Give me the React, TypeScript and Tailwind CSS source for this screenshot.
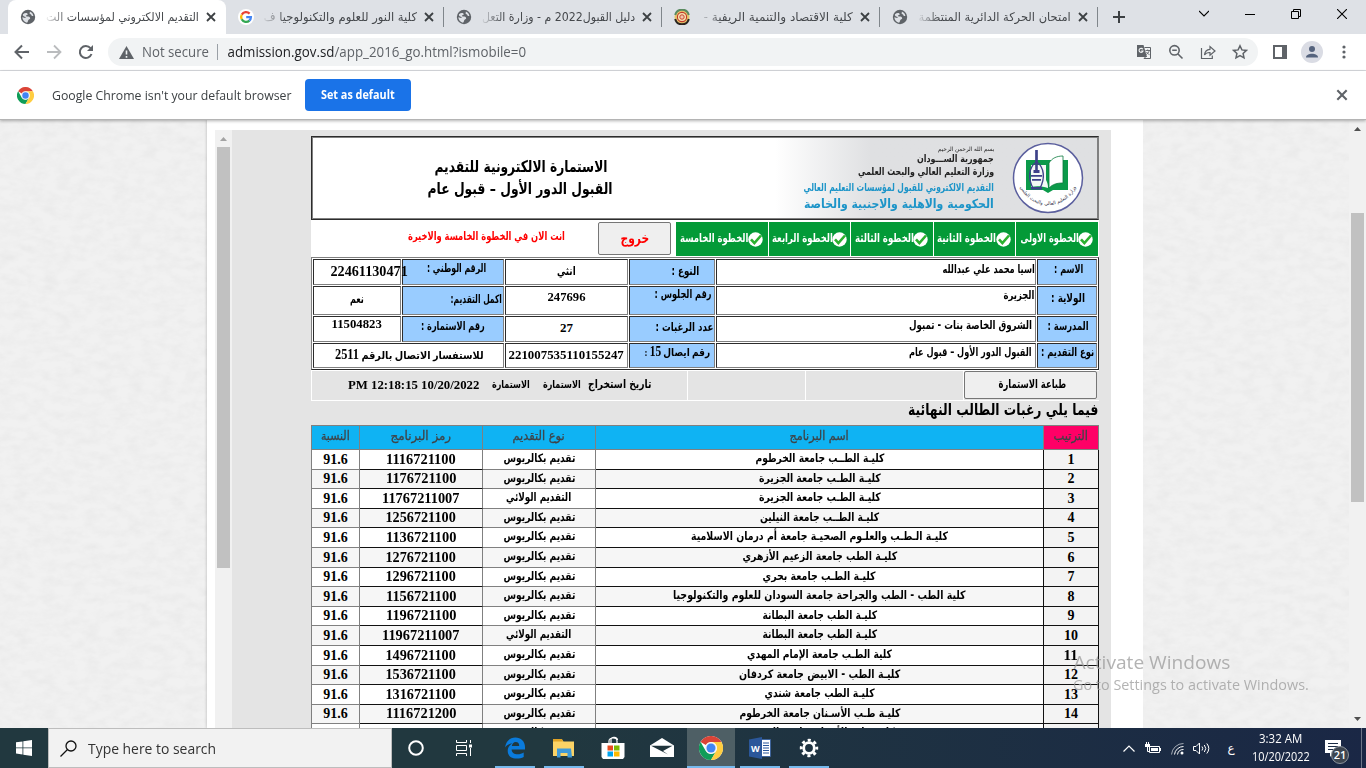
import { useLayoutEffect, useRef, useState } from "react";
import type { ReactNode } from "react";

/* A single line of text condensed or stretched to a fixed measure. */
function Fit({ w, className = "", children }: { w: number; className?: string; children: ReactNode }) {
  const ref = useRef<HTMLSpanElement>(null);
  const [scale, setScale] = useState(1);
  useLayoutEffect(() => {
    if (ref.current && ref.current.offsetWidth) setScale(w / ref.current.offsetWidth);
  }, [w]);
  return (
    <span className={`flex shrink-0 justify-center ${className}`} style={{ width: w }}>
      <span ref={ref} className="shrink-0 whitespace-pre" style={{ transform: `scaleX(${scale})` }}>
        {children}
      </span>
    </span>
  );
}

const AR = "font-['DejaVu_Sans',sans-serif] leading-none [direction:rtl]";
const AR_MIXED = "font-['Liberation_Serif','DejaVu_Sans',serif] leading-none [direction:rtl]";
const SERIF = "font-['Liberation_Serif','DejaVu_Sans',serif] leading-none";
const UI = "font-['Open_Sans','Noto_Sans',sans-serif] leading-none";

const Globe = () => (
  <svg className="size-4 shrink-0" viewBox="0 0 16 16">
    <circle cx="8" cy="8" r="7.2" fill="#5f6368" />
    <path d="M3 5.2C4.300 4.200 6 3.800 7.300 4.400c1 .6.300 1.700-.8 1.900-1 .3-.6 1.200.4 1.200 1.700 0 3.400.4 3.300 1.700-.1 1.200-1.700 1-2 2-.2.9-.4 1.800-1.200 2.500C4.300 13.200 2.400 10.700 2.300 8.300l2.800.6c.8.100.8-1-.1-1.200C3.900 7.400 2.500 7 3 5.200z" fill="#dee1e6" />
    <path d="M9.800 2.600c1.700.6 3.200 2.200 3.600 4.300-1 .5-1.900 0-2.100-.9-.2-.8-1.400-.6-1.700-1.500-.2-.7.6-1.100.2-1.900z" fill="#dee1e6" />
  </svg>
);

const Google = () => (
  <svg className="size-4 shrink-0" viewBox="0 0 16 16">
    <circle cx="8" cy="8" r="8" fill="#fff" />
    <g fill="none" strokeWidth="2.3">
      <path d="M3.8 5.6A4.9 4.9 0 0 1 11.6 4.6" stroke="#ea4335" />
      <path d="M3.7 5.7a4.9 4.9 0 0 0 0 4.6" stroke="#fbbc05" />
      <path d="M3.7 10.3a4.9 4.9 0 0 0 7.7 1.3" stroke="#34a853" />
      <path d="M8.2 8.2h4.7a4.8 4.8 0 0 1-1.6 3.5" stroke="#4285f4" />
    </g>
  </svg>
);

const Seal = () => (
  <svg className="size-4 shrink-0" viewBox="0 0 16 16">
    <circle cx="8" cy="8" r="7.5" fill="#e7c46a" />
    <path d="M1.200 6A7 7 0 0 1 14.800 6" fill="none" stroke="#5a8a60" strokeWidth="2" />
    <path d="M1.200 10a7 7 0 0 0 13.600 0" fill="none" stroke="#2a2420" strokeWidth="2" />
    <circle cx="8" cy="8" r="4.6" fill="#f6e3b0" stroke="#c23a2c" strokeWidth="1.1" />
    <circle cx="8" cy="8" r="2.2" fill="#f3c9b0" stroke="#c8452e" />
  </svg>
);

const Cross = ({ className = "" }: { className?: string }) => (
  <svg className={`shrink-0 ${className}`} viewBox="0 0 12 12">
    <path d="M2 2l8 8M10 2l-8 8" stroke="currentColor" strokeWidth="1.8" />
  </svg>
);

const Chrome = ({ className = "" }: { className?: string }) => (
  <svg className={`shrink-0 ${className}`} viewBox="0 0 48 48">
    <circle cx="24" cy="24" r="24" fill="#fff" />
    <path d="M3.2 12A24 24 0 0 1 44.8 12H24a12 12 0 0 0-10.4 6z" fill="#db4437" />
    <path d="M3.2 12A24 24 0 0 0 24 48l10.4-18A12 12 0 0 1 13.6 30z" fill="#0f9d58" />
    <path d="M44.8 12A24 24 0 0 1 24 48l10.4-18A12 12 0 0 0 24 12z" fill="#ffcd40" />
    <circle cx="24" cy="24" r="11.5" fill="#f1f1f1" />
    <circle cx="24" cy="24" r="9" fill="#4285f4" />
  </svg>
);

const tabs = [
  { title: "التقديم الالكتروني لمؤسسات الت", w: 153, icon: <Globe />, active: true },
  { title: "كلية النور للعلوم والتكنولوجيا ف", w: 153, icon: <Google />, active: false },
  { title: "دليل القبول2022 م - وزارة التعل", w: 153, icon: <Globe />, active: false },
  { title: "كلية الاقتصاد والتنمية الريفية -", w: 149, icon: <Seal />, active: false },
  { title: "امتحان الحركة الدائرية المنتظمة", w: 152, icon: <Globe />, active: false },
];

function TabStrip() {
  return (
    <div className="flex h-[34px] shrink-0 bg-[#dee1e6] pl-2">
      {tabs.map((t) => (
        <div
          key={t.title}
          className={
            t.active
              ? "flex w-[218px] shrink-0 items-center rounded-t-lg bg-white pl-3"
              : "flex w-[218px] shrink-0 items-center pl-3"
          }
        >
          {t.icon}
          <div className="flex w-[163px] justify-end [mask-image:linear-gradient(to_right,transparent_8px,black_32px)]">
            <Fit w={t.w} className={`${AR} pb-px text-[12px] text-[#45484c]`}>{t.title}</Fit>
          </div>
          <Cross className="ml-[6px] size-3 text-[#3c4043]" />
          {!t.active && <span className="ml-[8px] h-5 w-px bg-[#80868b]" />}
        </div>
      ))}
      <div className="flex flex-1 items-center pl-[15px]">
        <svg className="size-3" viewBox="0 0 12 12">
          <path d="M6 0v12M0 6h12" stroke="#3c4043" strokeWidth="2" />
        </svg>
        <div className="ml-auto flex h-full items-start gap-[36px] pr-[19px] pt-[9px] text-black">
          <svg className="size-[10px]" viewBox="0 0 10 10"><path d="M0 2l5 5 5-5" fill="none" stroke="currentColor" strokeWidth="1.1" /></svg>
          <svg className="size-[10px]" viewBox="0 0 10 10"><path d="M0 5.5h10" stroke="currentColor" /></svg>
          <svg className="size-[10px]" viewBox="0 0 10 10"><path d="M.5 2.5h7v7h-7zM2.5 2.5v-2h7v7h-2" fill="none" stroke="currentColor" /></svg>
          <svg className="size-[10px]" viewBox="0 0 10 10"><path d="M0 0l10 10M10 0L0 10" stroke="currentColor" strokeWidth="1.1" /></svg>
        </div>
      </div>
    </div>
  );
}

function Toolbar() {
  return (
    <div className="flex h-[37px] shrink-0 items-center border-b border-[#dadce0] bg-white pl-[14px] text-[#5f6368]">
      <svg className="size-4" viewBox="0 0 16 16"><path d="M15 8H2M8 1.5L1.5 8 8 14.5" fill="none" stroke="currentColor" strokeWidth="2" /></svg>
      <svg className="ml-4 size-4 text-[#babcbe]" viewBox="0 0 16 16"><path d="M1 8h13M8 1.5L14.5 8 8 14.5" fill="none" stroke="currentColor" strokeWidth="1.8" /></svg>
      <svg className="ml-4 size-4" viewBox="0 0 16 16">
        <path d="M13.5 10A6 6 0 1 1 12.5 4.2" fill="none" stroke="currentColor" strokeWidth="2" />
        <path d="M15 1v6H9z" fill="currentColor" />
      </svg>
      <div className="ml-[14px] flex h-7 w-[1150px] items-center rounded-full bg-[#f1f3f4] pl-[11px] pr-[10px]">
        <svg className="h-[13px] w-[15px]" viewBox="0 0 15 13">
          <path d="M7.5 0L15 13H0z" fill="currentColor" />
          <path d="M7.5 4.5v4M7.5 10v1.7" stroke="#f1f3f4" strokeWidth="1.6" />
        </svg>
        <Fit w={67} className={`${UI} ml-[8px] text-[14px] text-[#5f6368]`}>Not secure</Fit>
        <span className="ml-[8px] h-4 w-px bg-[#9aa0a6]" />
        <Fit w={299} className={`${UI} ml-[9px] text-[14px] text-[#5f6368]`}>
          <span className="text-[#202124]">admission.gov.sd</span>/app_2016_go.html?ismobile=0
        </Fit>
        <div className="ml-auto flex items-center gap-4">
          <svg className="size-4" viewBox="0 0 16 16">
            <path d="M1 1h6.5l3.5 12H1z" fill="currentColor" />
            <path d="M8.5 3.5h6v11H8l2-2" fill="none" stroke="currentColor" />
            <path d="M9.5 6.5h4.5M11.7 5.5v1M13.2 6.5c-.4 2-1.5 3-3 4M10.5 8c.8 1.500 1.800 2 3 2.600" fill="none" stroke="currentColor" strokeWidth=".9" />
            <path d="M6.800 5.300A2 2 0 1 0 7 7H5.200" fill="none" stroke="#f1f3f4" strokeWidth="1.100" />
          </svg>
          <svg className="size-4" viewBox="0 0 16 16"><path d="M6.500 1.600a4.700 4.700 0 1 1 0 9.400 4.700 4.700 0 0 1 0-9.400M10 10l4.500 4.500M4.200 6.300h4.600" fill="none" stroke="currentColor" strokeWidth="1.600" /></svg>
          <svg className="size-4" viewBox="0 0 16 16"><path d="M1.500 4v10.500h10.800v-3M4.500 11c.3-4 2-5.500 5.500-5.700V2.500L15 7l-5 4.200V8.500C7.500 8.400 5.800 9 4.500 11z" fill="none" stroke="currentColor" strokeWidth="1.200" /></svg>
          <svg className="size-4" viewBox="0 0 16 16"><path d="M8 1.800l1.900 4.100 4.500.5-3.300 3 .9 4.400L8 11.600l-4 2.200.9-4.400-3.300-3 4.500-.5z" fill="none" stroke="currentColor" strokeWidth="1.500" /></svg>
        </div>
      </div>
      <svg className="ml-[15px] size-[14px]" viewBox="0 0 14 14"><path d="M1 1h12v12H1z" fill="none" stroke="currentColor" strokeWidth="2" /><path d="M9 0h5v14H9z" fill="currentColor" /></svg>
      <svg className="ml-[14px] size-[22px]" viewBox="0 0 22 22">
        <circle cx="11" cy="11" r="11" fill="#dadce4" />
        <circle cx="11" cy="8" r="3" fill="#55637d" />
        <path d="M5 16.500c0-5 12-5 12 0z" fill="#55637d" />
      </svg>
      <svg className="ml-[19px] h-[14px] w-1" viewBox="0 0 4 14" fill="currentColor"><circle cx="2" cy="2" r="1.600" /><circle cx="2" cy="7" r="1.600" /><circle cx="2" cy="12" r="1.600" /></svg>
    </div>
  );
}

function InfoBar() {
  return (
    <div className="z-10 flex h-[49px] shrink-0 items-center border-b border-[#b4b4b4] bg-white pl-[17px] shadow-[0_1px_3px_rgba(0,0,0,0.3)]">
      <Chrome className="size-[17px]" />
      <Fit w={240} className={`${UI} ml-[18px] text-[13px] text-[#3c4043]`}>Google Chrome isn't your default browser</Fit>
      <button className="ml-[13px] flex h-8 w-[106px] items-center justify-center rounded bg-[#1a73e8] text-white">
        <Fit w={74} className={`${UI} text-[12px] font-bold`}>Set as default</Fit>
      </button>
      <Cross className="ml-auto mr-[17px] size-[14px] text-[#5f6368]" />
    </div>
  );
}

const Paper = ({ className }: { className: string }) => (
  <svg className={className}>
    <filter id="paper" x="0" y="0" width="100%" height="100%">
      <feTurbulence type="fractalNoise" baseFrequency="0.07 0.12" numOctaves="4" seed="4" />
      <feColorMatrix values="0 0 0 0 .45  0 0 0 0 .45  0 0 0 0 .45  .14 .14 0 0 -.11" />
    </filter>
    <rect width="100%" height="100%" fill="#f1f1f1" />
    <rect width="100%" height="100%" filter="url(#paper)" />
  </svg>
);

const Logo = () => (
  <svg className="size-[74px] shrink-0" viewBox="0 0 74 74">
    <circle cx="37" cy="37" r="34.500" fill="#fff" stroke="#5b5f9e" strokeWidth="1.500" />
    <path d="M15 19h42v30H42l-5 3-5-3H15z" fill="#0b9a4a" />
    <path d="M38 22c3-5 8-7 14-7v27c-6 0-10 1-14 5z" fill="#fff" stroke="#0b7a3e" strokeWidth=".8" />
    <path d="M20 24h15v15c1 2 2 4 2 8-6-2-12-2-17-1z" fill="#f3faf5" />
    <path d="M25.500 9v12c-8 5-9 17-3 27M25.500 21c8 5 9 17 3 27" fill="none" stroke="#3e4189" strokeWidth="1.400" />
    <path d="M24.200 9h2.600v20h-2.600zM20 34h11v1.800H20zM21 38h9v1.800h-9zM22.500 29h6v3h-6zM20 46h11v2.500H20z" fill="#3e4189" />
    <path id="rim" d="M8 43a30.500 30.500 0 0 0 58 0" fill="none" />
    <text className="font-['DejaVu_Sans',sans-serif]" fontSize="4.800" fill="#35354a" textAnchor="middle">
      <textPath href="#rim" startOffset="50%">وزارة التعليم العالي والبحث العلمي</textPath>
    </text>
  </svg>
);

const Tick = () => (
  <svg className="-ml-px size-[15px] shrink-0" viewBox="0 0 15 15">
    <circle cx="7.500" cy="7.500" r="7.200" fill="#fff" />
    <path d="M3 7.300l3.400 3.800L13 3.500" fill="none" stroke="#2bb12f" strokeWidth="2.600" />
  </svg>
);

function Banner() {
  return (
    <div className="flex h-[84px] items-stretch border border-[#2c2c2c] border-r-[#808080] bg-white p-px ring-1 ring-inset ring-[#808080]">
      <div className="flex w-[462px] shrink-0 flex-col items-start pt-[21px] text-black">
        <Fit w={173} className={`${AR} ml-[121px] text-[16px] font-bold`}>الاستمارة الالكترونية للتقديم</Fit>
        <Fit w={185} className={`${AR} ml-[115px] mt-[6px] text-[16px] font-bold`}>القبول الدور الأول – قبول عام</Fit>
      </div>
      <div className="flex flex-1 items-center bg-linear-to-r from-white to-[#dfe0e2] to-30%">
        <div className="flex flex-1 flex-col items-end pr-[17px] text-[#222]">
          <Fit w={56} className={`${AR} text-[6px]`}>بسم الله الرحمن الرحيم</Fit>
          <Fit w={77} className={`${AR} mt-[2px] text-[10px] font-bold`}>جمهورية الســـودان</Fit>
          <Fit w={136} className={`${AR} mt-[2px] text-[10.500px] font-bold`}>وزارة التعليم العالي والبحث العلمي</Fit>
          <Fit w={190} className={`${AR} mt-[6px] text-[11px] font-bold text-[#1c94c8]`}>التقديم الالكتروني للقبول لمؤسسات التعليم العالي</Fit>
          <Fit w={190} className={`${AR} mt-[5px] text-[12.500px] font-bold text-[#1c94c8]`}>الحكومية والاهلية والاجنبية والخاصة</Fit>
        </div>
        <Logo />
        <div className="w-[12px]" />
      </div>
    </div>
  );
}

const steps = [
  { t: "الخطوة الخامسة", w: 68, c: "w-[92px]" },
  { t: "الخطوة الرابعة", w: 61, c: "w-[81px]" },
  { t: "الخطوة الثالثة", w: 59, c: "w-[82px]" },
  { t: "الخطوة الثانية", w: 59, c: "w-[81px]" },
  { t: "الخطوة الاولى", w: 58, c: "w-[82px]" },
];

function Steps() {
  return (
    <div className="flex h-[37px] gap-px bg-white pt-[2px]">
      <div className="flex w-[286px] shrink-0 items-start pl-[97px] pt-[9px]">
        <Fit w={157} className={`${AR} text-[11.500px] font-bold text-[#ff0000]`}>انت الان في الخطوة الخامسة والاخيرة</Fit>
      </div>
      <button className="mr-[4px] flex h-[33px] w-[73px] shrink-0 items-center justify-center rounded-[2px] border border-[#767676] bg-[#efefef] pb-[2px]">
        <Fit w={29} className={`${AR} text-[14px] font-bold text-[#ff0000]`}>خروج</Fit>
      </button>
      {steps.map((s) => (
        <div key={s.t} className={`flex h-[34px] items-center justify-center bg-[#039a37] pr-px ${s.c}`}>
          <Fit w={s.w} className={`${AR} text-[11.500px] font-bold text-white`}>{s.t}</Fit>
          <Tick />
        </div>
      ))}
    </div>
  );
}

type Cell = { t: string; w: number; p: string; blue?: boolean; num?: boolean; mixed?: boolean };
const info: Cell[] = [
  { t: "22461130471", w: 77, p: "pl-[17px] pb-px text-[14px]", num: true },
  { t: "الرقم الوطني :", w: 59, p: "pl-[24px] pb-[7px]", blue: true },
  { t: "انثي", w: 19, p: "pl-[51px] pb-px" },
  { t: "النوع :", w: 28, p: "pl-[41px] pb-px", blue: true },
  { t: "اسيا محمد علي عبدالله", w: 92, p: "pl-[226px] pb-[5px]" },
  { t: "الاسم :", w: 29, p: "pl-[16px] pb-[5px]", blue: true },

  { t: "نعم", w: 14, p: "pl-[36px] pb-[2px]" },
  { t: "اكمل التقديم:", w: 51, p: "pl-[48px] pb-[2px]", blue: true },
  { t: "247696", w: 38, p: "pl-[41px] pb-[9px] text-[13px]", num: true },
  { t: "رقم الجلوس :", w: 57, p: "pl-[25px] pb-[11px]", blue: true },
  { t: "الجزيرة", w: 31, p: "pl-[286px] pb-[9px]" },
  { t: "الولاية :", w: 34, p: "pl-[13px] pb-[4px]", blue: true },

  { t: "11504823", w: 50, p: "pl-[18px] pb-[12px] text-[13px]", num: true },
  { t: "رقم الاستمارة :", w: 64, p: "pl-[18px] pb-[4px]", blue: true },
  { t: "27", w: 13, p: "pl-[54px] pb-[3px] text-[13px]", num: true },
  { t: "عدد الرغبات :", w: 58, p: "pl-[25px] pb-[3px]", blue: true },
  { t: "الشروق الخاصة بنات - تمبول", w: 123, p: "pl-[192px] pb-[6px]" },
  { t: "المدرسة :", w: 41, p: "pl-[10px] pb-[5px]", blue: true },

  { t: "للاستفسار الاتصال بالرقم 2511", w: 149, p: "col-span-2 pl-[21px] pb-px", mixed: true },
  { t: "221007535110155247", w: 115, p: "pl-[3px] pb-[3px] text-[13px]", num: true },
  { t: "رقم ايصال 15 :", w: 66, p: "pl-[14px] pb-[7px]", blue: true, mixed: true },
  { t: "القبول الدور الأول – قبول عام", w: 123, p: "pl-[192px] pb-[6px]" },
  { t: "نوع التقديم :", w: 53, p: "pl-[3px] pb-[6px]", blue: true },
];

/* Digits are set a little larger than the Arabic around them. */
const mixedRuns = (t: string) =>
  t.split(/(\d+)/).map((part, i) =>
    i % 2 ? <span key={i} className="text-[14px]">{part}</span> : part
  );

function InfoGrid() {
  return (
    <div className="grid h-[113px] grid-cols-[88px_102px_123px_86px_320px_60px] grid-rows-[26px_29px_26px_25px] gap-px border border-[#808080] border-b-[#2c2c2c] border-r-[#2c2c2c] bg-white p-px">
      {info.map((c) => (
        <div
          key={c.t}
          className={`flex min-w-0 items-center border border-[#2c2c2c] border-b-[#808080] border-r-[#808080] font-bold text-black ${c.blue ? "bg-[#99ccff]" : "bg-white"} ${c.p}`}
        >
          {c.num ? (
            <Fit w={c.w} className={`${SERIF} relative`}>{c.t}</Fit>
          ) : c.mixed ? (
            <Fit w={c.w} className={`${AR_MIXED} text-[11px]`}>{mixedRuns(c.t)}</Fit>
          ) : (
            <Fit w={c.w} className={`${AR} text-[11.500px]`}>{c.t}</Fit>
          )}
        </div>
      ))}
    </div>
  );
}

const BSC = "تقديم بكالريوس";
const STATE = "التقديم الولائي";
const wishes: { name: string; w: number; type: string; code: string; h: string }[] = [
  { name: "كليـة الطــب جامعة الخرطوم", w: 129, type: BSC, code: "1116721100", h: "h-[20px]" },
  { name: "كليـة الطـب جامعة الجزيرة", w: 122, type: BSC, code: "1176721100", h: "h-[19px]" },
  { name: "كليـة الطـب جامعة الجزيرة", w: 122, type: STATE, code: "11767211007", h: "h-[20px]" },
  { name: "كليـة الطــب جامعة النيلين", w: 119, type: BSC, code: "1256721100", h: "h-[19px]" },
  { name: "كليـة الـطـب والعلـوم الصحيـة جامعة أم درمان الاسلامية", w: 257, type: BSC, code: "1136721100", h: "h-[20px]" },
  { name: "كليـة الطب جامعة الزعيم الأزهري", w: 155, type: BSC, code: "1276721100", h: "h-[20px]" },
  { name: "كليـة الطـب جامعة بحري", w: 113, type: BSC, code: "1296721100", h: "h-[19px]" },
  { name: "كلية الطب - الطب والجراحة جامعة السودان للعلوم والتكنولوجيا", w: 293, type: BSC, code: "1156721100", h: "h-[20px]" },
  { name: "كليـة الطب جامعة البطانة", w: 115, type: BSC, code: "1196721100", h: "h-[19px]" },
  { name: "كليـة الطب جامعة البطانة", w: 115, type: STATE, code: "11967211007", h: "h-[20px]" },
  { name: "كلية الطـب جامعة الإمام المهدي", w: 145, type: BSC, code: "1496721100", h: "h-[20px]" },
  { name: "كليـة الطب - الابيض جامعة كردفان", w: 161, type: BSC, code: "1536721100", h: "h-[19px]" },
  { name: "كليـة الطب جامعة شندي", w: 110, type: BSC, code: "1316721100", h: "h-[20px]" },
  { name: "كليـة طـب الأسـنان جامعة الخرطوم", w: 161, type: BSC, code: "1116721200", h: "h-[19px]" },
  { name: "كليـة طب الأسنان جامعة الجزيرة", w: 150, type: BSC, code: "1176721200", h: "h-[20px]" },
];

const COLS = "grid grid-cols-[48px_123px_113px_448px_55px]";
const MID = "flex items-center justify-center border-b border-r";

function Wishes() {
  return (
    <div className="w-[788px] border-l border-t border-[#808080] font-bold text-black">
      <div className={`${COLS} h-6 text-[#3f4347]`}>
        {[
          ["النسبة", 29],
          ["رمز البرنامج", 61],
          ["نوع التقديم", 52],
          ["اسم البرنامج", 59],
          ["الترتيب", 34],
        ].map(([t, w], i) => (
          <div key={t} className={`${MID} border-[#808080] pb-[2px] ${i === 4 ? "bg-[#ff0066]" : "bg-[#0fb3f3]"}`}>
            <Fit w={Number(w)} className={`${AR} text-[12.500px] font-normal [-webkit-text-stroke:0.3px_#3f4347]`}>{t}</Fit>
          </div>
        ))}
      </div>
      {wishes.map((r, i) => (
        <div key={i} className={`${COLS} ${r.h} ${i % 2 ? "bg-[#f6f6f6]" : "bg-white"}`}>
          <div className={`${MID} border-[#808080]`}>
            <Fit w={25} className={`${SERIF} text-[14px]`}>91.6</Fit>
          </div>
          <div className={`${MID} border-b-[#111] border-r-[#808080]`}>
            <Fit w={r.code.length * 7} className={`${SERIF} text-[14px]`}>{r.code}</Fit>
          </div>
          <div className={`${MID} border-[#808080] pb-px`}>
            <Fit w={r.type === BSC ? 72 : 65} className={`${AR} text-[11.500px]`}>{r.type}</Fit>
          </div>
          <div className={`${MID} border-[#111] pb-px`}>
            <Fit w={r.w} className={`${AR} text-[11.500px]`}>{r.name}</Fit>
          </div>
          <div className={`${MID} border-[#111] bg-[#f3f3f3]`}>
            <Fit w={i < 9 ? 7 : 14} className={`${SERIF} text-[14px]`}>{i + 1}</Fit>
          </div>
        </div>
      ))}
    </div>
  );
}

function PrintRow() {
  return (
    <div className="flex h-[31px] gap-px border-b border-white bg-white pl-px pt-px">
      <div className="flex w-[375px] items-center bg-[#e4e4e4] pb-[2px] pl-[36px] font-bold text-black">
        <Fit w={131} className={`${SERIF} text-[12px]`}>PM 12:18:15 10/20/2022</Fit>
        <Fit w={38} className={`${AR} ml-[13px] text-[11px]`}>الاستمارة</Fit>
        <Fit w={38} className={`${AR} ml-[13px] text-[11px]`}>الاستمارة</Fit>
        <Fit w={63} className={`${AR} ml-[7px] text-[11.500px]`}>تاريخ استخراج</Fit>
      </div>
      <div className="w-[117px] bg-[#e4e4e4]" />
      <div className="w-[157px] bg-[#e4e4e4]" />
      <div className="flex-1 bg-[#e4e4e4]">
        <button className="flex h-[28px] w-[133px] items-center justify-center rounded-[2px] border border-[#767676] bg-[#efefef] pb-[2px] pl-[3px]">
          <Fit w={68} className={`${AR} text-[12px] font-bold text-black`}>طباعة الاستمارة</Fit>
        </button>
      </div>
    </div>
  );
}

function Page() {
  return (
    <div className="flex min-h-0 flex-1 overflow-hidden bg-[#eeeeee]">
      <Paper className="h-full w-[207px] shrink-0" />
      <div className="flex w-[936px] shrink-0 bg-white pl-2 pt-[10px] shadow-[0_0_3px_rgba(0,0,0,0.25)]">
        <div className="flex w-[896px] overflow-hidden bg-[#e4e4e4]">
          <div className="flex w-[17px] shrink-0 flex-col items-center bg-[#f1f1f1]">
            <svg className="h-[17px] w-[9px]" viewBox="0 0 9 17"><path d="M1 11h7L4.500 7z" fill="#a3a3a3" /></svg>
            <div className="h-[421px] w-[13px] bg-[#c1c1c1]" />
          </div>
          <div className="ml-[79px] w-[788px] shrink-0 pt-[6px]">
            <Banner />
            <Steps />
            <InfoGrid />
            <PrintRow />
            <div className="flex h-6 items-start justify-end pr-px pt-px">
              <Fit w={190} className={`${AR} text-[16px] font-bold text-black`}>فيما يلي رغبات الطالب النهائية</Fit>
            </div>
            <Wishes />
          </div>
        </div>
      </div>
      <Paper className="h-full w-[206px] shrink-0" />
      <div className="flex w-[17px] shrink-0 flex-col items-center bg-[#f1f1f1]">
        <svg className="h-[17px] w-[9px]" viewBox="0 0 9 17"><path d="M1 11h7L4.500 7z" fill="#505050" /></svg>
        <div className="mt-[76px] h-[289px] w-[13px] bg-[#c1c1c1]" />
        <svg className="mt-auto h-[17px] w-[9px]" viewBox="0 0 9 17"><path d="M1 6h7l-3.500 4z" fill="#505050" /></svg>
      </div>
    </div>
  );
}

const apps: { name: string; on: boolean; focus?: boolean; icon: ReactNode }[] = [
  {
    name: "edge", on: true,
    icon: <svg className="size-[22px]" viewBox="0 0 22 22"><path d="M1 10.500C2 3.500 6.500.5 11.300.5 17 .5 21 4.500 21 10v2.600H7.600c.2 3.500 3 4.700 5.900 4.700 2.400 0 4.500-.7 6.200-1.800v4.600c-2 1-4.400 1.500-6.900 1.500C7 21.600 3.700 18.400 3.700 14c0-3.500 2-6.300 4.800-7.800C5.500 6.500 2.700 8 1 10.500zM7.800 9h7.400c0-2.400-1-4-3.500-4C9.600 5.100 8.200 6.800 7.800 9z" fill="#0a7bdc" fillRule="evenodd" /></svg>,
  },
  {
    name: "explorer", on: true,
    icon: <svg className="h-[20px] w-[22px]" viewBox="0 0 22 20"><path d="M0 1.500h9l1.500 2H21V18H0z" fill="#fbd366" /><path d="M0 1h9l1 2.500H0z" fill="#e0a326" /><path d="M4 10.500h14l1 9h-4.500V15h-7v4.500H4z" fill="#3f9ad9" /></svg>,
  },
  {
    name: "store", on: false,
    icon: <svg className="h-[24px] w-[24px]" viewBox="0 0 24 24"><path d="M8 8V5c0-4 8-4 8 0v3M10 8V3c1-2.500 6-2 6.500 1" fill="none" stroke="#fff" strokeWidth="1.200" /><path d="M.5 7h23v14l-1.500 2h-20l-1.500-2z" fill="#fff" /><path d="M6.500 9.500H12v5H6.500z" fill="#e64b20" /><path d="M13 9.500h5.500v5H13z" fill="#7fba00" /><path d="M6.500 15.500H12v5H6.500z" fill="#00a4ef" /><path d="M13 15.500h5.500v5H13z" fill="#ffb900" /></svg>,
  },
  {
    name: "mail", on: false,
    icon: <svg className="h-[20px] w-[24px]" viewBox="0 0 24 20"><path d="M0 7.500L12 0l12 7.500V19H0z" fill="#fff" /><path d="M1 7.800h21.500L13 13l5 3.500z" fill="#20343c" /></svg>,
  },
  { name: "chrome", on: true, focus: true, icon: <Chrome className="size-6" /> },
  {
    name: "word", on: true,
    icon: (
      <svg className="size-[22px]" viewBox="0 0 22 22">
        <path d="M12 2.500h9.500v17H12z" fill="#fff" stroke="#2b579a" strokeWidth=".8" />
        <path d="M14 6h6M14 8.500h6M14 11h6M14 13.500h6M14 16h6" stroke="#2b579a" />
        <path d="M0 2.500L13 0v22L0 19.500z" fill="#2b579a" />
        <text x="6.400" y="14.500" textAnchor="middle" fontSize="9" fontWeight="700" fill="#fff" className="font-['Open_Sans',sans-serif]">W</text>
      </svg>
    ),
  },
  {
    name: "settings", on: true,
    icon: (
      <svg className="size-[20px]" viewBox="0 0 20 20" fill="none" stroke="#fff">
        <circle cx="10" cy="10" r="5.300" strokeWidth="2.800" />
        <circle cx="10" cy="10" r="7.800" strokeWidth="2.800" strokeDasharray="3.060 3.066" strokeDashoffset="1.530" />
      </svg>
    ),
  },
];

function Taskbar() {
  return (
    <div className="flex h-10 shrink-0 bg-linear-to-r from-[#21383f] from-40% to-[#1a2745] text-white">
      <div className="flex w-12 shrink-0 items-center justify-center">
        <svg className="size-4" viewBox="0 0 16 16" fill="#fff"><path d="M0 2.300l6.500-.9v6.100H0zM7.300 1.300L16 0v7.500H7.300zM0 8.300h6.500v6.200L0 13.600zM7.300 8.300H16V16l-8.700-1.300z" /></svg>
      </div>
      <div className="flex w-[344px] shrink-0 items-center border border-[#bdbdbd] bg-[#f2f2f2] pl-[11px]">
        <svg className="size-[17px]" viewBox="0 0 17 17"><circle cx="11" cy="6" r="5" fill="none" stroke="#111" strokeWidth="1.300" /><path d="M7.500 9.500L.5 16.500" stroke="#111" strokeWidth="1.300" /></svg>
        <Fit w={128} className={`${UI} ml-[11px] text-[15px] text-[#333]`}>Type here to search</Fit>
      </div>
      <div className="flex w-12 shrink-0 items-center justify-center">
        <svg className="size-4" viewBox="0 0 16 16"><circle cx="8" cy="8" r="6.800" fill="none" stroke="#fff" strokeWidth="2" /></svg>
      </div>
      <div className="flex w-12 shrink-0 items-center justify-center">
        <svg className="size-4" viewBox="0 0 16 16" fill="none" stroke="#fff"><path d="M.5 0v2.500h10V0M.5 5.500h10v5H.5zM.5 16v-2.500h10V16M14.500 0v3M14.500 8v8" /><path d="M13 4.500h3v3h-3z" fill="#fff" stroke="none" /></svg>
      </div>
      <div className="ml-[3px] flex gap-px">
        {apps.map((a) => (
          <div key={a.name} className={`flex w-12 flex-col items-center ${a.focus ? "bg-[#4e5f65]" : ""}`}>
            <div className="flex h-[38px] items-center justify-center pt-[2px]">{a.icon}</div>
            {a.on && <div className={`h-[2px] bg-[#76b9ed] ${a.focus ? "w-12" : "w-10"}`} />}
          </div>
        ))}
      </div>
      <div className="ml-auto flex items-center">
        <div className="flex w-6 justify-center"><svg className="h-[7px] w-[12px]" viewBox="0 0 12 7"><path d="M.5 6.500L6 1l5.500 5.500" fill="none" stroke="#fff" strokeWidth="1.200" /></svg></div>
        <div className="flex w-6 justify-center">
          <svg className="h-[12px] w-[16px]" viewBox="0 0 16 12"><path d="M4.500 4.500h10v6h-10z" fill="none" stroke="#fff" /><path d="M6 6h7v3H6zM15 6h1v3h-1zM0 2h5v3H0z" fill="#fff" /><path d="M1.500 0v2M3.500 0v2M2.500 5v4.500h2" stroke="#fff" fill="none" /></svg>
        </div>
        <div className="flex w-6 justify-center">
          <svg className="size-[13px]" viewBox="0 0 13 13" fill="none" stroke="#fff"><path d="M.5 12.500a12 12 0 0 1 12-11" opacity=".6" /><path d="M3.500 12.500a9 9 0 0 1 9-8M6.500 12.500a6 6 0 0 1 6-5" /><circle cx="11" cy="11" r="1.500" fill="#fff" stroke="none" /></svg>
        </div>
        <div className="flex w-6 justify-center">
          <svg className="h-[13px] w-[17px]" viewBox="0 0 17 13" fill="none" stroke="#fff"><path d="M.5 4.500H3l3.500-3.500v11L3 8.500H.500zM9 4.500q1.500 2 0 4M11.300 3q3 3.500 0 7M13.800 1.500q4 5 0 10" /></svg>
        </div>
        <div className={`${AR} flex w-9 justify-center text-[12px]`}>ع</div>
        <div className="flex w-[62px] flex-col items-center gap-[6px] pl-[2px]">
          <Fit w={43} className={`${UI} text-[12px]`}>3:32 AM</Fit>
          <Fit w={58} className={`${UI} text-[12px]`}>10/20/2022</Fit>
        </div>
        <div className="flex w-[45px] justify-center pl-[7px]">
          <div className="relative">
            <svg className="mr-[8px] h-[17px] w-[16px]" viewBox="0 0 16 17"><path d="M0 0h16v13H8l-3 4v-4H0z" fill="#fff" /><path d="M3 3.500h10M3 6.500h10M3 9.500h7" stroke="#1c2c46" /></svg>
            <span className={`${UI} absolute left-[6px] top-[6px] flex size-[18px] items-center justify-center rounded-full border border-[#8d949c] bg-[#3d4550] text-[11px] font-semibold`}>21</span>
          </div>
        </div>
        <div className="ml-[5px] h-10 w-[5px] border-l border-[#6c7688]" />
      </div>
    </div>
  );
}

export default function App() {
  return (
    <div className="relative flex h-screen w-full flex-col overflow-hidden bg-white">
      <TabStrip />
      <Toolbar />
      <InfoBar />
      <Page />
      <Taskbar />
      <div className="pointer-events-none absolute left-[1073px] top-[653px] flex flex-col items-start gap-[5px] text-[#9a9a9a]/75">
        <Fit w={157} className={`${UI} text-[19px]`}>Activate Windows</Fit>
        <Fit w={236} className={`${UI} text-[15px]`}>Go to Settings to activate Windows.</Fit>
      </div>
    </div>
  );
}
